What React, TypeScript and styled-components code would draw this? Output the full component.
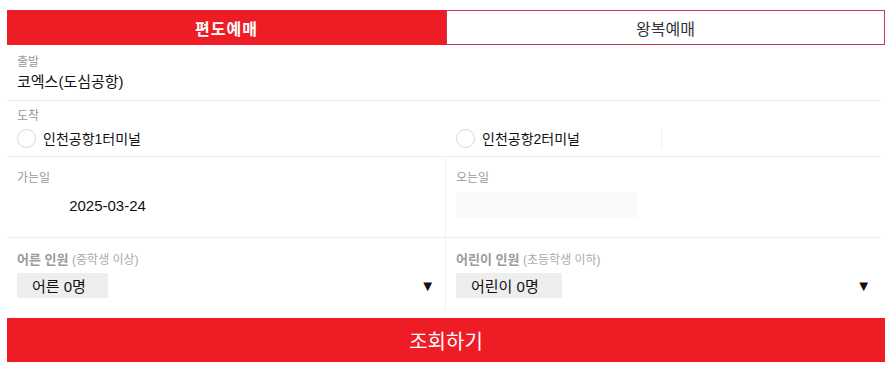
import * as React from 'react';
import styled, { createGlobalStyle } from 'styled-components';

const GlobalStyle = createGlobalStyle`
  html, body {
    margin: 0;
    padding: 0;
    background: #fff;
  }
  body {
    font-family: 'Liberation Sans', 'Noto Sans CJK KR', sans-serif;
    color: #111;
  }
  * {
    box-sizing: border-box;
  }
`;

const red = '#ee1c25';

const Wrapper = styled.div`
  width: 878px;
  margin: 10px 0 0 7px;
`;

const Tabs = styled.div`
  display: grid;
  grid-template-columns: 439px 439px;
  height: 35px;
`;

const Tab = styled.button<{ $active?: boolean }>`
  display: flex;
  align-items: center;
  justify-content: center;
  height: 35px;
  padding: 0;
  font-family: inherit;
  font-size: 16px;
  font-weight: ${(p) => (p.$active ? 700 : 400)};
  letter-spacing: ${(p) => (p.$active ? '1px' : '0')};
  color: ${(p) => (p.$active ? '#fff' : '#333')};
  background: ${(p) => (p.$active ? red : '#fff')};
  border: 1px solid ${(p) => (p.$active ? red : '#c8374d')};
  cursor: pointer;
`;

const Row = styled.div<{ $height: number; $last?: boolean }>`
  height: ${(p) => p.$height}px;
  border-bottom: ${(p) => (p.$last ? 'none' : '1px solid #eeeeee')};
  width: 874px;
`;

const Single = styled.div<{ $top: number }>`
  padding: ${(p) => p.$top}px 10px 0;
`;

const Split = styled.div`
  display: grid;
  grid-template-columns: 439px 435px;
  height: 100%;
`;

const Cell = styled.div<{ $top: number; $divider?: boolean }>`
  padding: ${(p) => p.$top}px 10px 0;
  border-right: ${(p) => (p.$divider ? '1px solid #f2f2f2' : 'none')};
  height: 100%;
`;

const Label = styled.div`
  font-size: 12px;
  line-height: 16px;
  color: #999;
`;

const StrongLabel = styled(Label)`
  font-size: 13px;
  font-weight: 700;
  color: #9a9a9a;
  small {
    font-weight: 400;
    font-size: 12px;
    color: #aaa;
  }
`;

const Value = styled.div`
  margin-top: 2px;
  font-size: 15px;
  line-height: 20px;
  color: #111;
`;

const Options = styled.div`
  display: grid;
  grid-template-columns: 439px 435px;
  margin-top: 4px;
`;

const Option = styled.label<{ $edge?: boolean }>`
  display: flex;
  align-items: center;
  gap: 7px;
  width: ${(p) => (p.$edge ? '206px' : 'auto')};
  height: 20px;
  font-size: 14px;
  color: #111;
  border-right: ${(p) => (p.$edge ? '1px solid #f0f0f0' : 'none')};
`;

const RadioCircle = styled.span`
  width: 19px;
  height: 19px;
  border-radius: 50%;
  border: 1px solid #d8d8d8;
  background: #fff;
  flex-shrink: 0;
`;

const DateBox = styled.div<{ $disabled?: boolean }>`
  margin-top: 6px;
  width: 181px;
  height: 26px;
  display: flex;
  align-items: center;
  justify-content: center;
  font-size: 15px;
  color: #111;
  background: ${(p) => (p.$disabled ? '#fafafa' : '#fff')};
`;

const SelectRow = styled.div`
  margin-top: 5px;
  display: flex;
  align-items: center;
  justify-content: space-between;
`;

const SelectBox = styled.div<{ $width: number }>`
  width: ${(p) => p.$width}px;
  height: 25px;
  background: #eeeeee;
  display: flex;
  align-items: center;
  padding-left: 15px;
  font-size: 15px;
  color: #111;
`;

const Caret = styled.span`
  font-size: 15px;
  color: #111;
  line-height: 1;
`;

const SubmitButton = styled.button`
  display: flex;
  align-items: center;
  justify-content: center;
  width: 878px;
  height: 44px;
  margin-top: 8px;
  border: none;
  padding: 0;
  background: ${red};
  color: #fff;
  font-family: inherit;
  font-size: 20px;
  cursor: pointer;
`;

const App: React.FC = () => {
  return (
    <>
      <GlobalStyle />
      <Wrapper>
        <Tabs>
          <Tab $active>편도예매</Tab>
          <Tab>왕복예매</Tab>
        </Tabs>

        <Row $height={56}>
          <Single $top={9}>
            <Label>출발</Label>
            <Value>코엑스(도심공항)</Value>
          </Single>
        </Row>

        <Row $height={56}>
          <Single $top={7}>
            <Label>도착</Label>
            <Options>
              <Option>
                <RadioCircle />
                인천공항1터미널
              </Option>
              <Option $edge>
                <RadioCircle />
                인천공항2터미널
              </Option>
            </Options>
          </Single>
        </Row>

        <Row $height={81}>
          <Split>
            <Cell $top={13} $divider>
              <Label>가는일</Label>
              <DateBox>2025-03-24</DateBox>
            </Cell>
            <Cell $top={13}>
              <Label>오는일</Label>
              <DateBox $disabled />
            </Cell>
          </Split>
        </Row>

        <Row $height={72} $last>
          <Split>
            <Cell $top={14} $divider>
              <StrongLabel>
                어른 인원 <small>(중학생 이상)</small>
              </StrongLabel>
              <SelectRow>
                <SelectBox $width={91}>어른 0명</SelectBox>
                <Caret>▼</Caret>
              </SelectRow>
            </Cell>
            <Cell $top={14}>
              <StrongLabel>
                어린이 인원 <small>(초등학생 이하)</small>
              </StrongLabel>
              <SelectRow>
                <SelectBox $width={106}>어린이 0명</SelectBox>
                <Caret>▼</Caret>
              </SelectRow>
            </Cell>
          </Split>
        </Row>

        <SubmitButton>조회하기</SubmitButton>
      </Wrapper>
    </>
  );
};

export default App;
